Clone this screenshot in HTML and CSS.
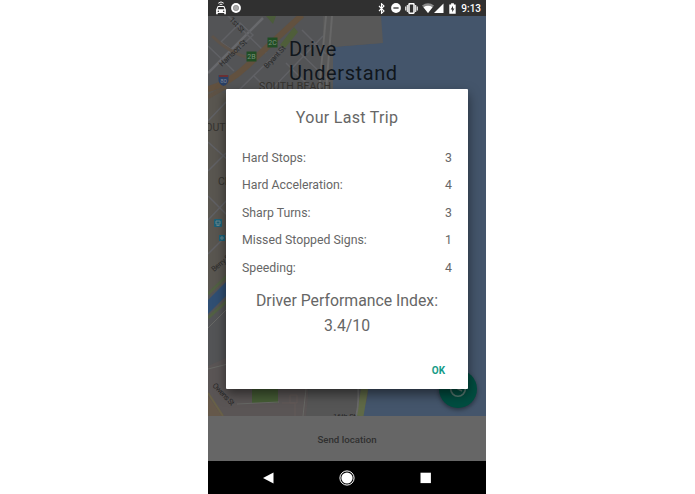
FILE: index.html
```
<!DOCTYPE html>
<html lang="en">
<head>
    <meta charset="utf-8">
    <title>Your Last Trip</title>
    <link rel="stylesheet" href="styles.css">
</head>
<body>
    <div class="phone">
        <!-- Status bar -->
        <header class="status-bar">
            <div class="notifications">
                <svg width="12" height="14" viewBox="0 0 12 14">
                    <path d="M3.3 2.2Q6 -.4 8.7 2.2M4.6 3.7Q6 2.5 7.4 3.7" fill="none" stroke="#fff" stroke-width="1"/>
                    <path d="M2.8 5h6.4l1.700 3.800v4.400H9.200V12H2.800v1.200H1.100V8.800z" fill="#fff"/>
                    <path d="M3.400 6.100h5.200l.8 2.100H2.600z" fill="#303030"/>
                    <circle cx="3.300" cy="10.200" r=".8" fill="#303030"/>
                    <circle cx="8.700" cy="10.200" r=".8" fill="#303030"/>
                </svg>
                <svg width="10" height="10" viewBox="0 0 10 10">
                    <circle cx="5" cy="5" r="4.900" fill="#fff"/>
                    <circle cx="5" cy="5" r="2.700" fill="#aaa" stroke="#888" stroke-width=".7"/>
                </svg>
            </div>
            <div class="system">
                <svg class="bluetooth" width="7" height="11" viewBox="0 0 7 11">
                    <path d="M1 3l5 5-2.500 2.300V.7L6 3 1 8" fill="none" stroke="#fff" stroke-width="1.100"/>
                </svg>
                <svg class="dnd" width="10" height="10" viewBox="0 0 10 10">
                    <circle cx="5" cy="5" r="4.900" fill="#fff"/>
                    <path d="M2.400 5h5.200" stroke="#303030" stroke-width="1.300"/>
                </svg>
                <svg class="vibrate" width="13" height="11" viewBox="0 0 13 11">
                    <path d="M.7 3.500v4M2.400 2v7M10.600 2v7M12.300 3.500v4" stroke="#ddd" stroke-width="1.300"/>
                    <rect x="4" y=".8" width="5" height="9.400" rx=".6" fill="#303030" stroke="#fff" stroke-width="1.500"/>
                </svg>
                <svg class="wifi" width="12" height="10" viewBox="0 0 12 10">
                    <path d="M0 2.400Q6-2 12 2.400L6 10z" fill="#8a8a8a"/>
                    <path d="M1.500 4.200Q6 1.500 10.500 4.200L6 10z" fill="#fff"/>
                </svg>
                <svg class="signal" width="10" height="10" viewBox="0 0 10 10">
                    <path d="M0 10L9.500.4V10z" fill="#fff"/>
                </svg>
                <svg class="battery" width="7" height="11" viewBox="0 0 7 11">
                    <path d="M.3 1.400h1.800V.3h2.800v1.100h1.800v9.300H.3z" fill="#fff"/>
                    <path d="M4 2.700L1.700 6.400h1.500v2.800L5.400 5.500H4z" fill="#303030"/>
                </svg>
                <span class="clock">9:13</span>
            </div>
        </header>

        <!-- Map, dimmed behind the dialog -->
        <main class="screen">
            <svg class="map" width="278" height="400" viewBox="0 0 278 400">
                <rect width="278" height="400" fill="#535456"/>
                <path d="M0 70L45 90V245L0 280z" fill="#595650"/>
                <path d="M0 350L45 330 100 373V400H0z" fill="#5a5555"/>

                <!-- water and pier -->
                <path d="M125 31L137 30 173 27V0H278V400H152Q165 380 158 350V75H125z" fill="#44556b"/>
                <path d="M115 0H173L175 27 137 30 125 31V75H115z" fill="#585858"/>

                <!-- parks -->
                <path d="M58 0h10l-3 8z" fill="#4b5c3b"/>
                <path d="M72 29L86 11l4 5-13 16z" fill="#4f5e3a"/>
                <rect x="44" y="370" width="26" height="17" fill="#455c35"/>
                <path d="M157 370L152 400" stroke="#5f6946" stroke-width="7"/>
                <path d="M150 370Q151 388 148 400" fill="none" stroke="#686868" stroke-width="2"/>

                <!-- streets -->
                <g fill="none" stroke="#606165" stroke-width="1.500">
                    <path d="M0 57L55 2" stroke="#68696c" stroke-width="2.500"/>
                    <path d="M13 26L32 7 45 19 27 36zM20 0L58 37M62 75L115 20M78 47L106 75M90 35L118 62M94 14L118 38M30 75L74 32M46 60L60 74M0 30L26 55"/>
                    <path d="M0 105L18 86M0 126L20 144M0 155L18 137M0 180L20 200M0 204L20 183M0 238L20 218"/>
                </g>
                <path d="M118 0L111 75M124 0L118 75" fill="none" stroke="#676767" stroke-width="2"/>

                <!-- highway -->
                <path d="M0 73Q20 68 39 50T94-1" fill="none" stroke="#62513f" stroke-width="6"/>
                <path d="M4 20Q22 38 45 43" fill="none" stroke="#5d534a" stroke-width="3"/>
                <path d="M0 81L18 71" stroke="#5e5245" stroke-width="4"/>
                <path d="M0 380L14 400H0z" fill="#65584a"/>
                <path d="M0 377L15 400" stroke="#686047" stroke-width="2"/>

                <!-- creek -->
                <path d="M0 284L19 265V279L0 298z" fill="#304f73"/>
                <path d="M0 278L20 259M0 302L20 284" stroke="#526044" stroke-width="3"/>
                <path d="M0 312L20 292M0 353L20 348M29 388L71 386M98 373L95 400" stroke="#676865" stroke-width="1"/>
                <path d="M101 373H149Q150 388 147 400H98z" fill="#555"/>
                <path d="M74 387h13v13M82 379h7v8h-7z" fill="none" stroke="#655c58" stroke-width=".8"/>

                <!-- street names -->
                <g class="street">
                    <text transform="translate(14 51) rotate(-44)" textLength="35">Harrison St</text>
                    <text transform="translate(59 53) rotate(-47)" textLength="28">Bryant St</text>
                    <text transform="translate(21 4) rotate(46)" textLength="18">1st St</text>
                    <text transform="translate(6 256) rotate(-40)" textLength="24">Berry St</text>
                    <text transform="translate(4 370) rotate(46)" textLength="28">Owens St</text>
                    <text x="125" y="403" textLength="23">16th St</text>
                </g>
                <g class="area">
                    <text x="51" y="74" textLength="72">SOUTH BEACH</text>
                    <text x="-9" y="115">SOUTH</text>
                    <text x="10" y="169">CHINA</text>
                </g>

                <!-- exits and transit -->
                <g class="exit">
                    <rect x="38.500" y="35.500" width="10" height="10"/>
                    <rect x="59.500" y="21.500" width="10" height="10"/>
                    <text x="43.500" y="43">2B</text>
                    <text x="64.500" y="29">2C</text>
                </g>
                <path d="M10.500 59l2 1 3-1 3 1 2-1v5q0 4-5 6-5-2-5-6z" fill="#2a4065"/>
                <path d="M11 60h9" stroke="#6a3033" stroke-width="2"/>
                <text class="shield" x="15.500" y="67">80</text>
                <g fill="#1c6279">
                    <rect x="6" y="203" width="8" height="8" rx="1"/>
                    <rect x="11" y="219" width="6" height="6"/>
                </g>
                <path d="M8 205h4v3H8zM8.500 209.500h3M13 221h2v2h-2z" fill="none" stroke="#6b8790"/>
            </svg>

            <h1 class="headline">Drive<br>Understand</h1>

            <div class="fab">
                <svg width="20" height="20" viewBox="0 0 20 20">
                    <circle cx="10" cy="10" r="7.300" fill="none" stroke="#55776f" stroke-width="1.600"/>
                    <path d="M10 5v5l4 2" fill="none" stroke="#55776f" stroke-width="1.500"/>
                </svg>
            </div>

            <!-- Trip summary -->
            <section class="dialog">
                <h2 class="title">Your Last Trip</h2>
                <dl class="stats">
                    <div class="row"><dt>Hard Stops:</dt><dd>3</dd></div>
                    <div class="row"><dt>Hard Acceleration:</dt><dd>4</dd></div>
                    <div class="row"><dt>Sharp Turns:</dt><dd>3</dd></div>
                    <div class="row"><dt>Missed Stopped Signs:</dt><dd>1</dd></div>
                    <div class="row"><dt>Speeding:</dt><dd>4</dd></div>
                </dl>
                <div class="score">Driver Performance Index:<br><span class="value">3.4/10</span></div>
                <button class="ok">OK</button>
            </section>
        </main>

        <footer class="send-bar">Send location</footer>

        <!-- Navigation bar -->
        <nav class="nav-bar">
            <svg width="12" height="14" viewBox="0 0 12 14"><path d="M1 7L11.500 1.500v11z" fill="#fff"/></svg>
            <svg width="16" height="16" viewBox="0 0 16 16">
                <circle cx="8" cy="8" r="7.100" fill="none" stroke="#fff" stroke-width="1"/>
                <circle cx="8" cy="8" r="5.600" fill="#fff"/>
            </svg>
            <svg width="12" height="12" viewBox="0 0 12 12"><rect x=".5" y=".7" width="10.400" height="10.400" fill="#fff"/></svg>
        </nav>
    </div>
</body>
</html>
```
FILE: styles.css
```
body {
    margin: 0;
    background: #fff;
    font-family: Roboto, "Liberation Sans", sans-serif;
}

.phone {
    width: 278px;
    height: 494px;
    margin-left: 208px;
    display: flex;
    flex-direction: column;
    overflow: hidden;
    background: #000;
}

.status-bar {
    height: 16px;
    display: flex;
    justify-content: space-between;
    align-items: center;
    padding: 0 5px 0 7px;
    background: #303030;
    color: #fff;
}

.notifications,
.system {
    display: flex;
    align-items: center;
}

.notifications {
    gap: 4px;
}

.dnd {
    margin-left: 6px;
}

.vibrate {
    margin-left: 4px;
}

.wifi {
    margin-left: 4px;
}

.signal {
    margin-left: 0;
}

.battery {
    margin-left: 5px;
}

.clock {
    margin-left: 5px;
    font-size: 10px;
    font-weight: 500;
}

.screen {
    position: relative;
    height: 400px;
    overflow: hidden;
}

.map {
    display: block;
}

.street {
    font-size: 7.5px;
    fill: #292929;
}

.area {
    font-size: 10.5px;
    fill: #35332f;
}

.exit rect {
    fill: #204d24;
}

.exit text,
.shield {
    font-size: 7px;
    text-anchor: middle;
    fill: #76907a;
}

.shield {
    font-size: 6px;
    fill: #7f8999;
}

.headline {
    position: absolute;
    left: 81px;
    top: 21px;
    margin: 0;
    font-size: 20px;
    font-weight: 400;
    line-height: 24px;
    letter-spacing: 0.6px;
    color: #10161c;
}

.fab {
    position: absolute;
    left: 231px;
    top: 354px;
    width: 38px;
    height: 38px;
    display: flex;
    justify-content: center;
    align-items: center;
    border-radius: 50%;
    background: #004d40;
    box-shadow: 0 2px 4px rgba(0, 0, 0, 0.4);
}

.dialog {
    position: absolute;
    left: 18px;
    top: 73px;
    width: 242px;
    height: 300px;
    box-sizing: border-box;
    display: flex;
    flex-direction: column;
    padding: 17px 16px 8px;
    border-radius: 1px;
    background: #fff;
    color: #666;
    box-shadow: 0 5px 12px rgba(0, 0, 0, 0.5);
}

.title {
    margin: 0 0 14px;
    font-size: 16px;
    font-weight: 400;
    line-height: 24px;
    letter-spacing: 0.3px;
    text-align: center;
}

.stats {
    margin: 0;
}

.row {
    height: 27.5px;
    display: flex;
    justify-content: space-between;
    align-items: center;
    font-size: 12.3px;
}

.row dd {
    margin: 0;
}

.score {
    margin-top: 6px;
    font-size: 15.8px;
    line-height: 25px;
    text-align: center;
}

.ok {
    align-self: flex-end;
    margin-top: 21px;
    padding: 6px 7px;
    border: none;
    background: none;
    font-family: inherit;
    font-size: 10px;
    font-weight: 700;
    color: #149b87;
}

.send-bar {
    height: 45px;
    display: flex;
    justify-content: center;
    align-items: center;
    padding-top: 2px;
    box-sizing: border-box;
    background: #666;
    color: #303030;
    font-size: 9.7px;
    font-weight: 500;
}

.nav-bar {
    height: 33px;
    display: flex;
    justify-content: space-around;
    align-items: center;
    padding: 0 21px;
    background: #000;
}
```
